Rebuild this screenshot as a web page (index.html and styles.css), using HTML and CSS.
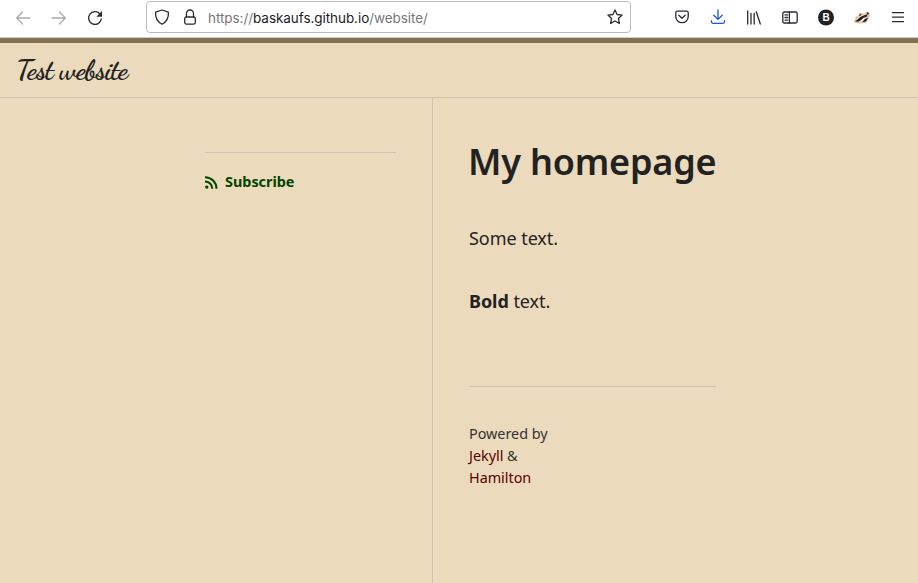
FILE: index.html
```html
<!DOCTYPE html>
<html lang="en">
<head>
<meta charset="utf-8">
<title>Test website</title>
<link rel="stylesheet" href="styles.css">
</head>
<body>
<div class="toolbar">
  <div class="nav">
    <svg class="muted" viewBox="0 0 16 16"><path d="M15 8H2M7.5 2 1.7 8l5.8 6"/></svg>
    <svg class="muted" viewBox="0 0 16 16"><path d="M1 8h13M8.5 2l5.8 6-5.8 6"/></svg>
    <svg viewBox="0 0 16 16"><path d="M12.8 3.8A6.4 6.4 0 1 0 14.3 9"/><path class="solid" d="M15 1v5.7H9.3z"/></svg>
  </div>
  <div class="address">
    <svg viewBox="0 0 16 16"><path d="M8 1 14.4 3.2C14.8 8.6 12.5 12.8 8 15.2 3.5 12.8 1.2 8.6 1.6 3.2z"/></svg>
    <svg class="lock" viewBox="0 0 16 16"><rect x="2.7" y="8" width="10.6" height="7.1" rx="1.5"/><path d="M4.5 8V4.5a3.5 3.5 0 0 1 7 0V8"/></svg>
    <span class="url">https://<b>baskaufs.github.io</b>/website/</span>
    <svg class="star" viewBox="0 0 16 16"><path d="m8 .9 2.1 4.6 5 .6-3.7 3.4 1 5L8 12l-4.4 2.5 1-5L.9 6.1l5-.6z"/></svg>
  </div>
  <div class="tools">
    <svg class="pocket" viewBox="0 0 16 16"><path d="M3 2.2h10A1.2 1.2 0 0 1 14.2 3.5v4.2a6.2 6 0 0 1-12.4 0V3.5A1.2 1.2 0 0 1 3 2.2z"/><path d="m4.8 6.2 3.2 3 3.2-3"/></svg>
    <svg class="download" viewBox="0 0 16 16"><path d="M8 .8v9.4M3.8 6.3 8 10.4l4.2-4.1M1.5 11.6v1.2q0 1.5 1.5 1.5h10q1.5 0 1.5-1.5v-1.2"/></svg>
    <svg viewBox="0 0 16 16"><path d="M1.7 1v13M5 3.3V14M8.2 3.3V14M10.3 1.8 14.3 14"/></svg>
    <svg viewBox="0 0 16 16"><rect x=".8" y="2" width="14.4" height="11" rx="1.7"/><path d="M7.4 2v11M3 4.9h2.6M3 7.5h2.6M3 10.1h2.6"/></svg>
    <svg class="badge" viewBox="0 0 16 16"><circle cx="8" cy="7.5" r="8"/><text x="8" y="11.2" text-anchor="middle">B</text></svg>
    <svg class="badger" viewBox="0 0 16 16"><path class="fur" d="m.5 11 1.6-1.4-.3-2.5 2.4-.4L5.8 3l3 1 5.4-1.8 1.3 1.6-1 4.8-2.4 3.7-5.4.7-4.8-.4z"/><path class="white" d="m2.5 9.8 3.8-4 7.2-2.6-1.3 3.4-4 4.3-4 .8z"/><path class="mask" d="m.9 11.3 2.3-1.6 3-2.6 3.2-1.7 4.2-1.3-.9 2.6-3 1-2.4 2.3-3 1.8zM8.3 12.2l2.6-3.2 3.2-1.2-2.2 3.6zM5 6.3 6 4.1l1.8.8zM12.5 2.8l1.6-.5.8 1.6-1.4.7z"/></svg>
    <svg viewBox="0 0 16 16"><path d="M2.5 2.7h11M2.5 7.2h11M2.5 11.7h11"/></svg>
  </div>
</div>
<header class="site-header"><a class="site-title">Test website</a></header>
<div class="page">
  <aside class="sidebar">
    <div class="subscribe">
      <svg viewBox="0 0 13 13"><circle cx="1.8" cy="11.1" r="1.7"/><path d="M0 5.4a7.3 7.3 0 0 1 7.3 7.3M0 1.2a11.5 11.5 0 0 1 11.5 11.5"/></svg>
      <a>Subscribe</a>
    </div>
  </aside>
  <main class="content">
    <h1>My homepage</h1>
    <p>Some text.</p>
    <p><strong>Bold</strong> text.</p>
    <footer>Powered by<br><a>Jekyll</a> &amp;<br><a>Hamilton</a></footer>
  </main>
</div>
</body>
</html>
```
FILE: styles.css
```css
* { box-sizing: border-box; }
body { margin: 0; height: 583px; overflow: hidden; display: flex; flex-direction: column; background: #ebdabc; color: #222; font-family: "Noto Sans", sans-serif; }
svg { display: block; flex: none; width: 16px; height: 16px; overflow: visible; fill: none; stroke: #2b2a33; stroke-width: 1.3; stroke-linecap: round; stroke-linejoin: round; }
.toolbar { flex: none; height: 38px; display: flex; background: #fff; border-bottom: 1px solid #ccc; }
.nav { width: 146px; height: 35px; padding-left: 15px; display: flex; align-items: center; gap: 20px; }
.nav .muted { stroke: #aaa; }
.nav .solid { fill: #2b2a33; stroke: none; }
.address { width: 485px; height: 32px; margin-top: 1px; padding: 0 7px; display: flex; align-items: center; border: 1px solid #bcbcbf; border-radius: 4px; }
.lock { margin-left: 12px; }
.url { margin: 2px 0 0 10px; color: #777; font: 13.5px/18px Inter, sans-serif; letter-spacing: -0.06px; white-space: nowrap; }
.url b { font-weight: 400; color: #1c1b22; }
.star { margin-left: auto; }
.tools { height: 35px; margin-left: 43px; display: flex; align-items: center; gap: 20px; }
.pocket { margin-top: -1px; }
.download { stroke: #1b55d9; margin-top: -1px; }
.badge circle { fill: #222; stroke: none; }
.badge text { font: bold 10px "Liberation Sans", sans-serif; fill: #fff; stroke: none; }
.badger path { stroke: none; }
.badger .fur { fill: #dfc7b3; stroke: #e6a877; stroke-width: .7; }
.badger .mask { fill: #242122; }
.badger .white { fill: #fff; }
.site-header { flex: none; height: 60px; padding: 8px 18px 0; border-top: 5px solid #837051; border-bottom: 1px solid #d0c3b0; }
.site-title { display: inline-block; margin-left: -2px; font: 700 28.8px/38px "Dancing Script", cursive; letter-spacing: -1px; white-space: nowrap; }
.page { flex: 1; display: flex; }
.sidebar { width: 433px; padding: 54px 36px 0 205px; border-right: 1px solid #cfc3b5; }
.subscribe { height: 60px; padding-top: 18px; display: flex; align-items: flex-start; gap: 7px; border-top: 1px solid #cfc3b8; color: #004500; font-size: 14.4px; line-height: 22px; font-weight: 700; }
.subscribe svg { width: 13px; height: 13px; margin-top: 5px; stroke: #004500; stroke-width: 2; stroke-linecap: butt; }
.subscribe circle { fill: #004500; stroke: none; }
.content { width: 283px; padding: 37px 0 0 36px; }
h1 { margin: 0 0 0 -1px; font-size: 36px; line-height: 54px; font-weight: 600; letter-spacing: -0.2px; white-space: nowrap; }
p { margin: 0; font-size: 18px; line-height: 27px; letter-spacing: -0.05px; }
h1 + p { margin-top: 36px; }
p + p { margin-top: 36px; }
footer { margin-top: 71px; padding-top: 36px; border-top: 1px solid #cfc3b0; color: #333; font-size: 14.4px; line-height: 22px; letter-spacing: -0.03px; }
footer a { color: #5c0000; }
```
